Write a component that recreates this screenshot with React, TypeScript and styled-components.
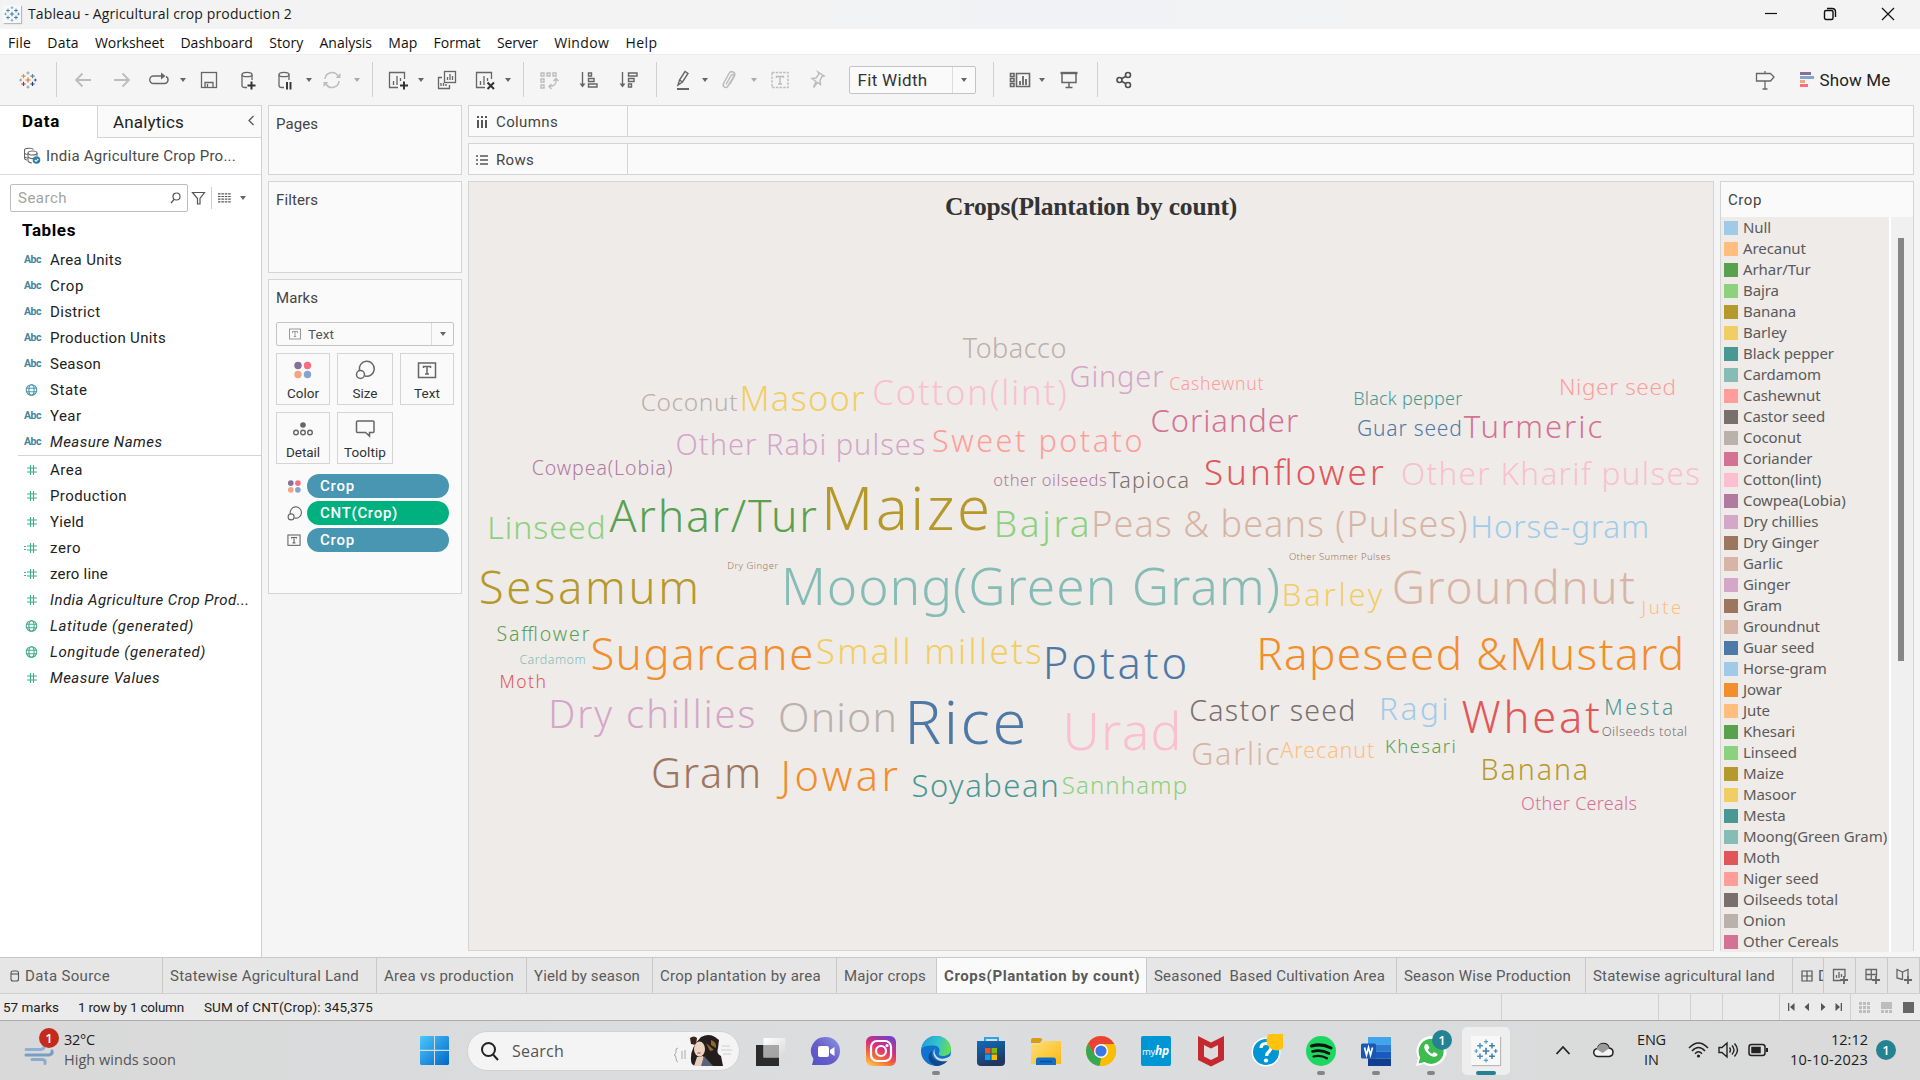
import React, { useLayoutEffect, useRef } from 'react';
import styled, { createGlobalStyle } from 'styled-components';

const Global = createGlobalStyle`
  * { box-sizing: border-box; }
  html, body { margin: 0; padding: 0; overflow: hidden; }
  body { background: #f5f5f5; }
  svg { display: block; flex: none; }
`;

const UI = `Roboto, "Liberation Sans", sans-serif`;
const SEGOE = `"Open Sans", "Noto Sans", sans-serif`;
const NOTO = `"Noto Sans", "Open Sans", sans-serif`;
const LINE = '#d4d4d4';

/* Text whose tracking is tuned so that it fills a given width. */
const FitSpan = styled.span`
  display: inline-block;
  width: max-content;
  white-space: pre;
  flex: none;
`;

function Fit({ w, children }: { w: number; children: string }) {
  const ref = useRef<HTMLSpanElement>(null);
  useLayoutEffect(() => {
    const el = ref.current;
    if (!el) return;
    el.style.letterSpacing = '0px';
    const natural = el.getBoundingClientRect().width;
    el.style.letterSpacing = `${(w - natural) / children.length}px`;
  }, [w, children]);
  return <FitSpan ref={ref}>{children}</FitSpan>;
}

const Screen = styled.div`
  width: 1920px;
  height: 1080px;
  display: flex;
  flex-direction: column;
  overflow: hidden;
  background: #f5f5f5;
  font-family: ${UI};
  font-size: 15px;
  color: #222;
`;

/* ---------- title bar and menu ---------- */

const TitleBar = styled.header`
  height: 29px;
  flex: none;
  display: flex;
  align-items: center;
  padding: 0 25px 1px 3px;
  background: linear-gradient(90deg, #f3f3f3 40%, #f0f2f5 55%, #f3f3f3 75%);
  font-family: ${SEGOE};
  font-size: 14px;
  line-height: 28px;
  color: #1a1a1a;
`;
const AppIcon = styled.div<{ $size: number; $mr?: number }>`
  width: ${(p) => p.$size}px;
  height: ${(p) => p.$size}px;
  margin-right: ${(p) => p.$mr ?? 0}px;
  display: flex;
  align-items: center;
  justify-content: center;
  background: #f8f8f8;
  box-shadow: 1px 1px 1px #b9b9b9;
`;
const WindowButtons = styled.div`
  margin-left: auto;
  display: flex;
  gap: 44.5px;
  align-items: center;
`;
const MenuBar = styled.nav`
  height: 25px;
  flex: none;
  display: flex;
  gap: 16.3px;
  padding-left: 8px;
  background: #fff;
  font-family: ${SEGOE};
  font-size: 14px;
  line-height: 27px;
  color: #111;
`;

const MENUS: [string, number][] = [
  ['File', 23], ['Data', 31.5], ['Worksheet', 69], ['Dashboard', 72.5], ['Story', 34], ['Analysis', 52.5],
  ['Map', 29], ['Format', 47], ['Server', 41], ['Window', 55], ['Help', 32],
];

function Plus({ x, y, r, c, w }: { x: number; y: number; r: number; c: string; w: number }) {
  return <path d={`M${x - r} ${y}h${2 * r}M${x} ${y - r}v${2 * r}`} stroke={c} strokeWidth={w} />;
}

function TableauMark({ size, colors }: { size: number; colors: string[] }) {
  const [c0, c1, c2, c3, c4, c5] = colors;
  return (
    <svg width={size} height={size} viewBox="0 0 32 32" fill="none">
      <Plus x={16} y={16} r={4.5} c={c0} w={2.2} />
      <Plus x={8} y={9} r={3.8} c={c1} w={2} />
      <Plus x={24} y={9} r={3.8} c={c2} w={2} />
      <Plus x={8} y={23} r={3.8} c={c3} w={2} />
      <Plus x={24} y={23} r={3.8} c={c4} w={2} />
      <Plus x={16} y={3.5} r={2.8} c={c5} w={1.5} />
      <Plus x={16} y={28.5} r={2.8} c={c5} w={1.5} />
      <Plus x={3} y={16} r={2.6} c={c5} w={1.5} />
      <Plus x={29} y={16} r={2.6} c={c4} w={1.5} />
    </svg>
  );
}
const BLUES = ['#3f7fae', '#4d8fbd', '#3f7fae', '#4d8fbd', '#3f7fae', '#5b9ac4'];

/* ---------- toolbar ---------- */

const Toolbar = styled.div`
  height: 51px;
  flex: none;
  display: flex;
  align-items: center;
  padding-bottom: 1px;
  background: #f5f5f5;
  border-top: 1px solid #ececec;
`;
const Slot = styled.div<{ $w: number; $gap: number }>`
  width: ${(p) => p.$w}px;
  margin-left: ${(p) => p.$gap}px;
  flex: none;
  display: flex;
  align-items: center;
  justify-content: center;
`;
const Rule = styled.div<{ $h: number }>`
  width: 1px;
  height: ${(p) => p.$h}px;
  flex: none;
  background: #cfcfcf;
`;
const Caret = styled.i<{ $c?: string; $s?: number }>`
  border: solid transparent;
  border-width: ${(p) => p.$s ?? 3}px ${(p) => p.$s ?? 3}px 0;
  border-top: ${(p) => (p.$s ?? 3) + 1}px solid ${(p) => p.$c ?? '#666'};
  border-bottom: 0;
`;
const Select = styled.div<{ $h: number }>`
  width: 100%;
  height: ${(p) => p.$h}px;
  display: flex;
  align-items: center;
  border: 1px solid #c4c4c4;
  border-radius: 2px;
  background: #fafafa;
`;
const SelectArrow = styled.div<{ $w: number }>`
  width: ${(p) => p.$w}px;
  align-self: stretch;
  margin-left: auto;
  border-left: 1px solid #dcdcdc;
  display: flex;
  align-items: center;
  justify-content: center;
`;
const SelectValue = styled.span`
  padding-left: 8px;
  font-size: 17px;
  color: #333;
`;
const ShowMe = styled.div`
  display: flex;
  align-items: center;
  gap: 6px;
  font-size: 17px;
  color: #222;
`;

const G = '#666';
const P = '#bcbcbc';

function Ico({ children, c = G, s = 24, w = 1.3 }: { children: React.ReactNode; c?: string; s?: number; w?: number }) {
  return (
    <svg width={s} height={s} viewBox={`0 0 ${s} ${s}`} fill="none" stroke={c} strokeWidth={w}>
      {children}
    </svg>
  );
}

const sheetPath = <><path d="M12 19.500H3.500v-15h15V11" /><path d="M7.500 17v-4M11 17V8M14.500 13v-3" /></>;

type Tool = { at: number; w: number; el: React.ReactNode };
const icon = (at: number, el: React.ReactNode): Tool => ({ at, w: 24, el });
const caret = (at: number, pale = false): Tool => ({ at, w: 8, el: <Caret $c={pale ? '#aaa' : '#666'} /> });
const rule = (at: number): Tool => ({ at: at + 0.5, w: 1, el: <Rule $h={35} /> });

const TOOLS: Tool[] = [
  icon(27.5, <TableauMark size={18} colors={['#e8762c', '#eb9129', '#5b879b', '#c72035', '#1f447e', '#7099a6']} />),
  rule(56),
  icon(83, <Ico c={P} w={1.8}><path d="M20 12H5M11.500 5.500L5 12l6.500 6.500" /></Ico>),
  icon(122, <Ico c={P} w={1.8}><path d="M4 12h15M12.500 5.500L19 12l-6.500 6.500" /></Ico>),
  icon(159, <Ico w={1.4}><path d="M14 8H6.500a3.700 3.700 0 0 0 0 7.500h11a3.700 3.700 0 0 0 1.500-7" /><path d="M14 4.500v7l4.500-3.500z" fill={G} stroke="none" /></Ico>),
  caret(183),
  icon(209, <Ico><rect x="4.500" y="4.500" width="15" height="15" /><path d="M8 19.500v-5h8v5M10.500 16v3" /></Ico>),
  icon(248, <Ico><path d="M11 19.500H9q-3 0-3-2V6.500M16 12V6.500" /><ellipse cx="11" cy="6.500" rx="5" ry="2.200" /><path d="M15.500 13.500v8M11.500 17.500h8" stroke="#333" strokeWidth="2" /></Ico>),
  icon(285, <Ico><path d="M11 19.500H9q-3 0-3-2V6.500M16 12V6.500" /><ellipse cx="11" cy="6.500" rx="5" ry="2.200" /><path d="M14 14v7.500M17.500 14v7.500" stroke="#333" strokeWidth="1.900" /></Ico>),
  caret(309),
  icon(332, <Ico c={P} w={1.5}><path d="M5 11a7 7 0 0 1 13-3M19 13a7 7 0 0 1-13 3" /><path d="M20.500 5v5h-5zM3.500 19v-5h5z" fill={P} stroke="none" /></Ico>),
  caret(357, true),
  rule(372),
  icon(397.5, <Ico>{sheetPath}<path d="M18 13.500v8M14 17.500h8" stroke="#333" strokeWidth="2" /></Ico>),
  caret(421),
  icon(447, <Ico><rect x="9.500" y="3.500" width="11" height="11" /><path d="M12.500 12V9M15 12V6M17.500 12V8M7 9.500H3.500v11h11V17M6 18v-3M8.500 18v-3M11 18v-2" /></Ico>),
  icon(484.5, <Ico>{sheetPath}<path d="M14.500 14.500l6.500 6.500M21 14.500L14.500 21" stroke="#333" strokeWidth="2" /></Ico>),
  caret(508),
  rule(523),
  icon(549, <Ico c={P} w={1.4}><path d="M4 5h3v3H4zM10 5h3v3h-3zM16 5h3v3h-3zM4 11h3v3H4zM4 17h3v3H4z" /><path d="M19 11q1 7-6.500 7.500M16.500 13l2.500-2.500 2.500 2.500M14.500 16l-2.500 2.500 2.500 2.500" /></Ico>),
  icon(588.5, <Ico w={1.4}><path d="M5.500 4v14" /><path d="M2.500 15.500h6l-3 4z" fill={G} stroke="none" /><path d="M11.500 5h3v3h-3zM11.500 10.500h5.500v3h-5.500zM11.500 16h8.500v3h-8.500z" /></Ico>),
  icon(628.5, <Ico w={1.4}><path d="M5.500 4v14" /><path d="M2.500 15.500h6l-3 4z" fill={G} stroke="none" /><path d="M11.500 5h8.500v3h-8.500zM11.500 10.500h5.500v3h-5.500zM11.500 16h3v3h-3z" /></Ico>),
  rule(656),
  icon(683, <Ico w={1.4}><path d="M7 17l1.500-5 5.500-8.500 3 2-5.500 8.500zM8.500 12l3 2" /><path d="M6 21h12" strokeWidth="2" /></Ico>),
  caret(704.5),
  icon(729, <Ico c={P} w={1.5}><path d="M9 16.500l5-9c1-2 3.500-.5 2.500 1.500l-5.500 9c-2 3-6 1-4.500-2.500l5.500-10c2-3.500 7-1.500 5.500 2.500l-4.500 8" /></Ico>),
  caret(753.5, true),
  icon(780, <Ico c={P} w={1.4}><rect x="4" y="4.500" width="16" height="15" strokeDasharray="2.500 1.200" /><path d="M8.500 10V8.500h7V10M12 8.500v7.500M10 16h4" /></Ico>),
  icon(817, <Ico c={P} w={1.5}><path d="M13 4l6 4-2 .5-2 4 .5 4-3-2-4 5 2.500-6-4-3 4-.5 3-4z" /></Ico>),
  { at: 912, w: 127, el: <Select $h={28}><SelectValue><Fit w={70}>Fit Width</Fit></SelectValue><SelectArrow $w={23}><Caret $s={3.5} /></SelectArrow></Select> },
  rule(993),
  icon(1020, <Ico w={1.6}><path d="M2.500 5.500h3.500v3H2.500zM2.500 10.500h3.500v3H2.500zM2.500 15.500h3.500v3H2.500zM8.500 5.500h13v13h-13z" /><path d="M12 17v-4M15 17V8M18 17v-6" strokeWidth="1.800" /></Ico>),
  caret(1042),
  icon(1069, <Ico w={1.5}><path d="M3.500 5h17" strokeWidth="2.400" /><path d="M5 6v8.500h14V6M12 14.500v5M8.500 19.500h7" /></Ico>),
  rule(1097),
  icon(1124, <Ico w={1.6} c="#505050"><circle cx="7.500" cy="12" r="2.500" /><circle cx="16" cy="7" r="2.500" /><circle cx="16" cy="17" r="2.500" /><path d="M9.700 10.700l4.200-2.400M9.700 13.300l4.200 2.400" /></Ico>),
  icon(1765, <Ico><path d="M3.500 5.500h14l3.500 3.500-3.500 4h-14zM12 3v2.500M12 13v8M9.500 21h5" /></Ico>),
  { at: 1845, w: 92, el: <ShowMe><svg width="14" height="16"><path fill="#866f98" d="M0 0h11v3H0z" /><path fill="#82a6cf" d="M0 4h14v3H0z" /><path fill="#f3a57f" d="M0 8h5v3H0z" /><path fill="#f5707f" d="M0 12h8v3H0z" /></svg><Fit w={71}>Show Me</Fit></ShowMe> },
];

function ToolStrip() {
  let end = 0;
  return (
    <Toolbar>
      {TOOLS.map((t, i) => {
        const gap = t.at - t.w / 2 - end;
        end = t.at + t.w / 2;
        return <Slot key={i} $w={t.w} $gap={gap}>{t.el}</Slot>;
      })}
    </Toolbar>
  );
}

/* ---------- data pane ---------- */

const Workspace = styled.main`
  height: 852px;
  flex: none;
  display: flex;
`;
const DataPane = styled.aside`
  width: 262px;
  flex: none;
  display: flex;
  flex-direction: column;
  background: #fff;
  border-top: 1px solid ${LINE};
  border-right: 1px solid #d0d0d0;
`;
const PaneTabs = styled.div`
  height: 32px;
  flex: none;
  display: flex;
`;
const DataTab = styled.div`
  width: 97px;
  padding-left: 22px;
  font: 700 17px/30px ${UI};
  color: #000;
`;
const AnalyticsTab = styled.div`
  flex: 1;
  display: flex;
  justify-content: space-between;
  padding: 0 6px 0 15px;
  font-size: 17px;
  line-height: 32px;
  background: #fafafa;
  border-left: 1px solid ${LINE};
  border-bottom: 1px solid ${LINE};
`;
const SourceRow = styled.div`
  height: 37px;
  flex: none;
  display: flex;
  align-items: center;
  gap: 5px;
  padding-left: 24px;
  color: #4a4a4a;
  border-bottom: 1px solid #dedede;
`;
const SearchRow = styled.div`
  height: 28px;
  flex: none;
  display: flex;
  align-items: center;
  margin: 9px 0 0 10px;
`;
const SearchBox = styled.div`
  width: 178px;
  height: 28px;
  margin-right: 3px;
  display: flex;
  align-items: center;
  justify-content: space-between;
  padding: 0 6px 0 7px;
  border: 1px solid #bdbdbd;
  border-radius: 2px;
  color: #a3a3a3;
`;
const Heading = styled.h2`
  margin: 8px 0 0 22px;
  font: 700 17px/21px ${UI};
  color: #000;
`;
const FieldList = styled.ul<{ $top: number; $lined?: boolean }>`
  list-style: none;
  margin: ${(p) => p.$top}px 0 0 18px;
  padding: 0;
  border-top: ${(p) => (p.$lined ? `1px solid ${LINE}` : '0')};
  padding-top: ${(p) => (p.$lined ? 1 : 0)}px;
`;
const Field = styled.li<{ $italic?: boolean }>`
  height: 26px;
  display: grid;
  grid-template-columns: 32px 1fr;
  align-items: center;
  font-style: ${(p) => (p.$italic ? 'italic' : 'normal')};
  color: #222;
  line-height: 26px;
`;
const FieldIcon = styled.span`
  display: flex;
  padding-left: 6px;
  font: 700 10.5px/26px ${UI};
  color: #45849d;
`;

const Globe = ({ c }: { c: string }) => (
  <svg width="16" height="14" viewBox="0 0 16 14" fill="none" stroke={c} strokeWidth="1.100">
    <circle cx="7.500" cy="7" r="5.300" /><ellipse cx="7.500" cy="7" rx="2.600" ry="5.300" /><path d="M2.500 5.200h10M2.500 8.800h10" />
  </svg>
);
const Hash = ({ calc }: { calc?: boolean }) => (
  <svg width="16" height="14" viewBox="0 0 16 14" fill="none" stroke="#3fae8b" strokeWidth="1.100">
    <path d="M3 5h10M3 9h10M6.500 2v10M9.500 2v10" />
    {calc && <path d="M-1 5.500h3M-1 8.500h3" />}
  </svg>
);

type FieldRow = [string, string, number, boolean?];
const DIMS: FieldRow[] = [
  ['abc', 'Area Units', 72], ['abc', 'Crop', 34], ['abc', 'District', 50.5], ['abc', 'Production Units', 116],
  ['abc', 'Season', 51], ['geo', 'State', 37.5], ['abc', 'Year', 31.5], ['abc', 'Measure Names', 112.5, true],
];
const MEASURES: FieldRow[] = [
  ['num', 'Area', 33], ['num', 'Production', 77], ['num', 'Yield', 34], ['calc', 'zero', 31], ['calc', 'zero line', 58],
  ['num', 'India Agriculture Crop Prod...', 199.5, true], ['geog', 'Latitude (generated)', 144, true],
  ['geog', 'Longitude (generated)', 156, true], ['num', 'Measure Values', 110, true],
];
const fieldIcon = (k: string) =>
  k === 'abc' ? <Fit w={17}>Abc</Fit> : k === 'geo' ? <Globe c="#4996b2" /> : k === 'geog' ? <Globe c="#3fae8b" /> : <Hash calc={k === 'calc'} />;
const fieldRows = (rows: FieldRow[]) =>
  rows.map(([k, name, w, it]) => (
    <Field key={name} $italic={it}><FieldIcon>{fieldIcon(k)}</FieldIcon><Fit w={w}>{name}</Fit></Field>
  ));

/* ---------- shelves ---------- */

const Shelves = styled.section`
  width: 194px;
  margin-left: 6px;
  flex: none;
  display: flex;
  flex-direction: column;
  gap: 6px;
`;
const Card = styled.div<{ $h: number }>`
  height: ${(p) => p.$h}px;
  padding: 0 7px;
  background: #fafafa;
  border: 1px solid ${LINE};
  color: #444;
`;
const CardTitle = styled.div<{ $mb?: number }>`
  line-height: 36px;
  margin-bottom: ${(p) => p.$mb ?? 0}px;
`;
const MarkType = styled.div`
  padding-left: 12px;
  display: flex;
  align-items: center;
  gap: 7px;
  font-size: 13.5px;
  color: #555;
`;
const MarkGrid = styled.div`
  display: grid;
  grid-template-columns: 54px 56px 54px;
  grid-auto-rows: 52px;
  gap: 7px;
  margin-top: 7px;
`;
const MarkButton = styled.div`
  border: 1px solid ${LINE};
  background: #fafafa;
  display: flex;
  flex-direction: column;
  align-items: center;
  font-size: 13.5px;
  line-height: 18px;
  color: #333;
  padding-top: 2px;
`;
const Pills = styled.div`
  display: flex;
  flex-direction: column;
  gap: 3px;
  margin-top: 10px;
`;
const PillRow = styled.div`
  display: grid;
  grid-template-columns: 22px 142px;
  padding-left: 8px;
  gap: 1px;
  align-items: center;
`;
const Pill = styled.div<{ $green?: boolean }>`
  height: 24px;
  border-radius: 12px;
  padding-left: 13px;
  background: ${(p) => (p.$green ? '#00b180' : '#4996b2')};
  color: #fff;
  font-weight: 500;
  line-height: 25px;
`;

const Dots = ({ s }: { s: number }) => (
  <svg width={s} height={s} viewBox="0 0 28 28">
    <circle cx="9" cy="9.500" r="3.700" fill="#866f98" /><circle cx="18.500" cy="9.500" r="3.700" fill="#f5707f" />
    <circle cx="9" cy="18.500" r="3.700" fill="#f3a57f" /><circle cx="18.500" cy="18.500" r="3.700" fill="#82a6cf" />
  </svg>
);
const SizeIcon = ({ s }: { s: number }) => (
  <svg width={s} height={s} viewBox="0 0 28 28" fill="none" stroke="#666" strokeWidth="1.500">
    <path d="M8.500 14.500A7.500 7.500 0 1 1 14 20" /><circle cx="9.500" cy="18.500" r="4" />
  </svg>
);
const TextIcon = ({ s, c = '#666' }: { s: number; c?: string }) => (
  <svg width={s} height={s} viewBox="0 0 28 28" fill="none" stroke={c} strokeWidth="1.500">
    <rect x="5.500" y="7" width="17" height="14.500" /><path d="M10.500 12v-1.500h7V12M14 10.500v7.500M12 18h4" />
  </svg>
);
const DetailIcon = () => (
  <svg width="28" height="28" viewBox="0 0 28 28" fill="none" stroke="#666" strokeWidth="1.400">
    <circle cx="14" cy="10" r="2.800" fill="#666" stroke="none" /><circle cx="7" cy="17.500" r="2.300" /><circle cx="14" cy="17.500" r="2.300" /><circle cx="21" cy="17.500" r="2.300" />
  </svg>
);
const TooltipIcon = () => (
  <svg width="28" height="28" viewBox="0 0 28 28" fill="none" stroke="#666" strokeWidth="1.500">
    <path d="M6.500 6h15.500q1 0 1 1v9.500q0 1-1 1h-3.500v3.500l-4-3.500H6.500q-1 0-1-1V7q0-1 1-1z" />
  </svg>
);

/* ---------- view ---------- */

const Canvas = styled.section`
  width: 1446px;
  margin-left: 6px;
  flex: none;
  display: flex;
  flex-direction: column;
  gap: 6px;
`;
const Shelf = styled.div`
  height: 32px;
  flex: none;
  display: flex;
  background: #fafafa;
  border: 1px solid ${LINE};
  line-height: 30px;
  color: #444;
`;
const ShelfLabel = styled.div`
  width: 159px;
  display: flex;
  align-items: center;
  gap: 8px;
  padding: 1px 0 0 7px;
  border-right: 1px solid ${LINE};
`;
const ViewRow = styled.div`
  height: 770px;
  display: flex;
  gap: 6px;
`;
const View = styled.div`
  width: 1246px;
  border: 1px solid ${LINE};
  background: #efebe8;
`;
const ViewTitle = styled.h1`
  margin: 0;
  height: 52px;
  text-align: center;
  font: 700 25.5px/49px "Liberation Serif", serif;
  color: #333;
`;
const CloudChart = styled.svg`
  font-family: ${NOTO};
  font-weight: 300;
`;
const Legend = styled.aside`
  width: 194px;
  border: 1px solid ${LINE};
  display: flex;
  flex-direction: column;
  background: #fafafa;
`;
const LegendTitle = styled.div`
  height: 35px;
  padding-left: 7px;
  line-height: 36px;
  color: #444;
`;
const LegendBody = styled.div`
  flex: 1;
  display: flex;
`;
const LegendList = styled.ul`
  width: 169px;
  margin: 0;
  padding: 0;
  list-style: none;
  background: #efebe8;
  border-right: 1px solid #fff;
`;
const LegendItem = styled.li<{ $c: string }>`
  height: 21px;
  display: flex;
  align-items: center;
  gap: 5px;
  padding-left: 3px;
  font: 400 15px/21px ${NOTO};
  color: #5a5a5a;
  letter-spacing: -0.08px;
  white-space: nowrap;
  &::before {
    content: '';
    width: 14px;
    height: 14px;
    flex: none;
    background: ${(p) => p.$c};
  }
`;
const ScrollTrack = styled.div`
  flex: 1;
  background: #f0f0f0;
  padding: 21px 0 0 7px;
  border-left: 1px solid #fff;
`;
const ScrollThumb = styled.div`
  width: 6px;
  height: 423px;
  background: #868686;
`;

const C = {
  blue: '#4e79a7', sky: '#a0cbe8', orange: '#f28e2b', peach: '#ffbe7d', green: '#59a14f', lime: '#8cd17d', gold: '#b6992d',
  yellow: '#f1ce63', teal: '#499894', aqua: '#86bcb6', red: '#e15759', salmon: '#ff9d9a', ash: '#79706e', stone: '#bab0ac',
  rose: '#d37295', pink: '#fabfd2', plum: '#b07aa1', lilac: '#d4a6c8', brown: '#9d7660', tan: '#d7b5a6',
};

const LEGEND: [string, string][] = [
  ['Null', C.sky], ['Arecanut', C.peach], ['Arhar/Tur', C.green], ['Bajra', C.lime], ['Banana', C.gold], ['Barley', C.yellow],
  ['Black pepper', C.teal], ['Cardamom', C.aqua], ['Cashewnut', C.salmon], ['Castor seed', C.ash], ['Coconut', C.stone],
  ['Coriander', C.rose], ['Cotton(lint)', C.pink], ['Cowpea(Lobia)', C.plum], ['Dry chillies', C.lilac], ['Dry Ginger', C.brown],
  ['Garlic', C.tan], ['Ginger', C.lilac], ['Gram', C.brown], ['Groundnut', C.tan], ['Guar seed', C.blue], ['Horse-gram', C.sky],
  ['Jowar', C.orange], ['Jute', C.peach], ['Khesari', C.green], ['Linseed', C.lime], ['Maize', C.gold], ['Masoor', C.yellow],
  ['Mesta', C.teal], ['Moong(Green Gram)', C.aqua], ['Moth', C.red], ['Niger seed', C.salmon], ['Oilseeds total', C.ash],
  ['Onion', C.stone], ['Other Cereals', C.rose],
];

/* word, left edge, right edge, baseline, font size, colour */
const WORDS: [string, number, number, number, number, string][] = [
  ['Tobacco', 963, 1065, 358, 27, C.stone],
  ['Coconut', 642, 737, 410.7, 24.5, C.stone],
  ['Masoor', 742.5, 864, 410.7, 34.5, C.yellow],
  ['Cotton(lint)', 874, 1065, 404.7, 34.5, C.pink],
  ['Ginger', 1071, 1163, 387, 29, C.lilac],
  ['Other Rabi pulses', 677, 924, 454.7, 29, C.lilac],
  ['Sweet potato', 933.5, 1141, 451.7, 30.5, C.salmon],
  ['Cowpea(Lobia)', 532.7, 671.4, 475, 19.5, C.plum],
  ['other oilseeds', 994, 1106, 486, 16.5, C.plum],
  ['Arhar/Tur', 610, 816, 531.7, 44.5, C.green],
  ['Maize', 826, 987, 530, 60, C.gold],
  ['Linseed', 490, 603, 538.7, 32, C.lime],
  ['Bajra', 997, 1086.5, 536.7, 37, C.lime],
  ['Dry Ginger', 728, 778, 568.7, 9.5, C.brown],
  ['Moong(Green Gram)', 785.3, 1277.5, 605, 51.5, C.aqua],
  ['Cashewnut', 1170, 1263, 390, 17.5, C.salmon],
  ['Black pepper', 1354.7, 1462, 405, 18, C.teal],
  ['Niger seed', 1561, 1674, 395, 22.5, C.salmon],
  ['Coriander', 1152, 1297.5, 431.7, 31, C.rose],
  ['Guar seed', 1358, 1460, 435.7, 21, C.blue],
  ['Turmeric', 1464, 1601.6, 437.7, 31, C.rose],
  ['Sunflower', 1205.7, 1383, 484.7, 35, C.red],
  ['Other Kharif pulses', 1402.5, 1698.4, 484.7, 31.5, C.pink],
  ['Tapioca', 1108.6, 1187.3, 487.7, 21.5, C.ash],
  ['Peas & beans (Pulses)', 1094.3, 1465.7, 536.7, 36, C.tan],
  ['Horse-gram', 1473, 1646.5, 537.7, 31.5, C.sky],
  ['Other Summer Pulses', 1289.4, 1390, 559.7, 9.5, C.brown],
  ['Sesamum', 481, 695, 604, 45.5, C.gold],
  ['Safflower', 497.5, 589, 640.7, 19.5, C.green],
  ['Cardamom', 520, 584.5, 663.7, 12.5, C.aqua],
  ['Moth', 501, 544.5, 687.7, 17.5, C.red],
  ['Sugarcane', 592.6, 811, 669.7, 43.5, C.orange],
  ['Small millets', 817.5, 1040, 663.7, 35, C.yellow],
  ['Potato', 1046.5, 1185, 678.7, 43.5, C.blue],
  ['Dry chillies', 551.4, 753.5, 727.7, 38, C.lilac],
  ['Onion', 780, 893.5, 731.7, 41, C.stone],
  ['Rice', 909.4, 1023.3, 744, 61.5, C.blue],
  ['Gram', 653, 757.5, 787.7, 41.5, C.brown],
  ['Jowar', 778, 897, 790.7, 41.5, C.orange],
  ['Soyabean', 913, 1056, 796.7, 31, C.teal],
  ['Urad', 1067, 1177, 750.3, 51.5, C.pink],
  ['Sannhamp', 1063, 1185, 793.7, 24, C.lime],
  ['Barley', 1284.5, 1381.6, 605.7, 31, C.yellow],
  ['Groundnut', 1394, 1634, 604, 46, C.tan],
  ['Jute', 1640.4, 1680.4, 614, 18.5, C.peach],
  ['Rapeseed &Mustard', 1260, 1680.4, 669.7, 44, C.orange],
  ['Castor seed', 1190.6, 1353, 720.7, 28.5, C.ash],
  ['Ragi', 1381.6, 1446, 719.7, 31.5, C.sky],
  ['Wheat', 1462, 1599, 732.7, 43.5, C.red],
  ['Mesta', 1606, 1671.4, 714.7, 21, C.teal],
  ['Oilseeds total', 1602.4, 1686, 735.7, 13, C.ash],
  ['Garlic', 1192.7, 1278.8, 764.7, 30.5, C.tan],
  ['Arecanut', 1280.4, 1374, 757.7, 21.5, C.peach],
  ['Khesari', 1386.5, 1454.3, 752.7, 18.5, C.green],
  ['Banana', 1483, 1585.7, 779.7, 28.5, C.gold],
  ['Other Cereals', 1522, 1636, 810, 18, C.rose],
];

/* side bearing, in em, of the outermost glyphs */
const lead = (ch: string) => ('TWA'.includes(ch) ? 0.01 : ch === 'J' ? -0.06 : 'COGSoc'.includes(ch) ? 0.05 : 0.085);
const trail = (ch: string) => ('rtcy'.includes(ch) ? 0.02 : 'nmuhidlap'.includes(ch) ? 0.085 : 0.05);

function WordCloud() {
  return (
    <CloudChart width="1244" height="716" viewBox="469 234 1244 716">
      {WORDS.map(([t, x0, x1, y, s, c]) => {
        const a = lead(t[0]) * s;
        const b = trail(t[t.length - 1]) * s;
        return (
          <text key={t} x={x0 - a} y={y} fontSize={s} fill={c} textLength={x1 - x0 + a + b} lengthAdjust="spacing">
            {t}
          </text>
        );
      })}
    </CloudChart>
  );
}

/* ---------- sheet tabs and status ---------- */

const SheetTabs = styled.div`
  height: 37px;
  flex: none;
  display: flex;
  background: #e6e6e6;
  border-top: 1px solid #c8c8c8;
  border-bottom: 1px solid #d0d0d0;
  color: #5a5a5a;
`;
const SheetTab = styled.div<{ $w: number; $active?: boolean; $pad?: number; $center?: boolean }>`
  width: ${(p) => p.$w}px;
  flex: none;
  display: flex;
  align-items: center;
  justify-content: ${(p) => (p.$center ? 'center' : 'flex-start')};
  gap: 5px;
  padding-left: ${(p) => (p.$center ? 0 : p.$pad ?? 7)}px;
  border-right: 1px solid #c8c8c8;
  overflow: hidden;
  line-height: ${(p) => (p.$active ? 34 : 36)}px;
  padding-top: ${(p) => (p.$active ? 0 : 1)}px;
  background: ${(p) => (p.$active ? '#fafafa' : 'transparent')};
  font-weight: ${(p) => (p.$active ? 700 : 400)};
`;
const StatusBar = styled.div`
  height: 27px;
  flex: none;
  display: flex;
  padding-left: 3px;
  background: #ebebeb;
  border-bottom: 1px solid #acacac;
  font-size: 13.5px;
  line-height: 26px;
  color: #222;
`;
const StatusText = styled.div<{ $w: number }>`
  width: ${(p) => p.$w}px;
  flex: none;
`;
const StatusCell = styled.div<{ $w: number }>`
  width: ${(p) => p.$w}px;
  flex: none;
  border-left: 1px solid #d0d0d0;
  display: flex;
  align-items: center;
  justify-content: center;
`;

const SHEETS: [string, number, number][] = [
  ['Statewise Agricultural Land', 214, 189], ['Area vs production', 150, 130], ['Yield by season', 126, 106],
  ['Crop plantation by area', 184, 161], ['Major crops', 100, 82], ['Crops(Plantation by count)', 210, 196],
  ['Seasoned  Based Cultivation Area', 250, 231], ['Season Wise Production', 189, 167], ['Statewise agricultural land', 207, 182],
];

/* ---------- taskbar ---------- */

const Taskbar = styled.footer`
  height: 59px;
  flex: none;
  display: flex;
  align-items: center;
  background: linear-gradient(90deg, #d9d9d9, #dbdddf 45%, #dadada);
  font-family: ${SEGOE};
  font-size: 14.5px;
  line-height: 20px;
  color: #1d1d1d;
`;
const Weather = styled.div`
  width: 420px;
  flex: none;
  display: flex;
  align-items: center;
  gap: 2px;
  padding: 0 0 2px 24px;
`;
const Stack = styled.div<{ $align?: string }>`
  display: flex;
  flex-direction: column;
  align-items: ${(p) => p.$align ?? 'flex-start'};
`;
const Soft = styled.span`
  color: #555;
`;
const TaskSearch = styled.div`
  width: 273px;
  height: 40px;
  margin: 0 3px 0 18px;
  flex: none;
  display: flex;
  align-items: center;
  gap: 12px;
  padding: 0 6px 0 12px;
  border-radius: 20px;
  border: 1px solid #d2d2d2;
  background: #f4f4f4;
  font-size: 16px;
  color: #555;
`;
const Art = styled.div`
  margin-left: auto;
`;
const TaskIcon = styled.div<{ $on?: boolean }>`
  width: ${(p) => (p.$on ? 48 : 55)}px;
  margin-left: ${(p) => (p.$on ? 3.5 : 0)}px;
  height: 48px;
  flex: none;
  position: relative;
  display: flex;
  align-items: center;
  justify-content: center;
  border-radius: 5px;
  background: ${(p) => (p.$on ? '#eeeeee' : 'transparent')};
`;
const RunDot = styled.i<{ $on?: boolean }>`
  position: absolute;
  bottom: ${(p) => (p.$on ? 0 : -0.5)}px;
  left: 50%;
  width: ${(p) => (p.$on ? 20 : 8)}px;
  height: 4px;
  transform: translateX(-50%);
  border-radius: 2px;
  background: ${(p) => (p.$on ? '#258292' : '#858585')};
`;
const Count = styled.b<{ $c: string }>`
  width: 20px;
  height: 20px;
  border-radius: 50%;
  display: flex;
  align-items: center;
  justify-content: center;
  background: ${(p) => p.$c};
  color: #fff;
  font: 600 13px/20px ${SEGOE};
`;
const CornerCount = styled.div`
  position: absolute;
  top: 3px;
  right: 6px;
`;
const WindBox = styled.div`
  position: relative;
  width: 38px;
  height: 40px;
`;
const WindCount = styled.div`
  position: absolute;
  left: 15px;
  top: -2px;
`;
const Tray = styled.div`
  margin-left: auto;
  padding: 0 24px 1px 0;
  display: flex;
  align-items: center;
`;
const TrayItem = styled.div<{ $ml: number }>`
  margin-left: ${(p) => p.$ml}px;
`;
const HpTile = styled.div`
  width: 30px;
  height: 30px;
  border-radius: 2px;
  background: #0096d6;
  color: #fff;
  font: 400 9.5px/29px ${SEGOE};
  text-align: center;
  white-space: nowrap;
  letter-spacing: -0.3px;
  b { font-style: italic; font-size: 12px; }
`;

const S = ({ children }: { children: React.ReactNode }) => <svg width="34" height="34" viewBox="0 0 34 34">{children}</svg>;

const TASKS: { el: React.ReactNode; run?: boolean; on?: boolean; badge?: boolean }[] = [
  { el: <S><defs><linearGradient id="tv" x1="0" y1="0" x2="1" y2="1"><stop offset="0" stopColor="#fff" /><stop offset="1" stopColor="#d8d8d8" /></linearGradient></defs><path fill="#2b2b2b" d="M2 11h23v21H2z" /><path fill="url(#tv)" d="M9.500 4h22v19.500h-22z" /><path fill="#8f8f8f" fillOpacity=".75" d="M9.500 11H25v12.500H9.500z" /></S> },
  { el: <S><defs><linearGradient id="ch" x1="0" y1="1" x2="1" y2="0"><stop offset="0" stopColor="#4f52c8" /><stop offset=".5" stopColor="#6a5fc8" /><stop offset="1" stopColor="#8c9be6" /></linearGradient></defs><path d="M17 3a14 14 0 1 1 0 28H3l1.500-6A14 14 0 0 1 17 3z" fill="url(#ch)" /><rect x="9" y="12" width="11" height="11" rx="2" fill="#fff" /><path d="M21 16l4.500-3v9L21 19z" fill="#fff" /></S> },
  { el: <S><defs><linearGradient id="ig" x1=".2" y1="1" x2=".7" y2="0"><stop offset="0" stopColor="#fdc04c" /><stop offset=".3" stopColor="#f56a3b" /><stop offset=".6" stopColor="#d92d7a" /><stop offset="1" stopColor="#7a3fc8" /></linearGradient></defs><rect x="2" y="2" width="30" height="30" rx="6" fill="url(#ig)" /><g fill="none" stroke="#fff" strokeWidth="2.200"><rect x="7" y="7" width="20" height="20" rx="6" /><circle cx="17" cy="17" r="5" /></g><circle cx="23" cy="11.500" r="1.500" fill="#fff" /></S> },
  { run: true, el: <S><defs><linearGradient id="eg" x1="0" y1=".3" x2="1" y2=".5"><stop offset="0" stopColor="#1c9ee0" /><stop offset=".55" stopColor="#36c3c9" /><stop offset="1" stopColor="#66e04f" /></linearGradient></defs><circle cx="17" cy="17" r="15" fill="#0f72cf" /><path d="M2.500 15C4 6 10 2 17 2c9 0 15 6 15 13 0 5-4 7-8 7-3 0-5-1-4-3 2-4-1-7.500-5.500-7.500C9 11.500 4 12 2.500 15z" fill="url(#eg)" /><path d="M13 17c-2 7 4 11 10 10l6-1c-3 4-8 6-12 6-6-2-11-10-4-15z" fill="#114a8b" /><path d="M17 14c-2.500 1-2 7 2 9.500 3 2 8 1.500 12-1.500l1 1.500-2.500 3c-4 1.500-9 1-12-1.500-4-3.500-4-9-.5-11z" fill="#dcdcdc" /></S> },
  { el: <S><defs><linearGradient id="st" x1="0" y1="0" x2=".4" y2="1"><stop offset="0" stopColor="#0f6cbd" /><stop offset="1" stopColor="#21375f" /></linearGradient></defs><path d="M11 9V4h13v5" fill="none" stroke="#2aa6e8" strokeWidth="2" /><path d="M3 7h28v21q0 4-4 4H7q-4 0-4-4z" fill="url(#st)" /><path fill="#f25022" d="M11 14h5.500v5.500H11z" /><path fill="#7fba00" d="M17.500 14H23v5.500h-5.500z" /><path fill="#00a4ef" d="M11 20.500h5.500V26H11z" /><path fill="#ffb900" d="M17.500 20.500H23V26h-5.500z" /></S> },
  { el: <S><defs><linearGradient id="fe" x1="0" y1="0" x2="1" y2="1"><stop offset="0" stopColor="#ffe07a" /><stop offset="1" stopColor="#fdb813" /></linearGradient></defs><path d="M2 6q0-2 2-2h7q1.500 0 2.500 2h-.5L11 9H2z" fill="#dc9a0c" /><path d="M2 10h9l3-3h17q1 0 1 1v22H2z" fill="url(#fe)" /><path d="M7 31v-5q0-2.500 2.500-2.500h15Q27 23.500 27 26v5z" fill="#0f6fc6" /><path d="M11 27.500h12" stroke="#0a4d94" strokeWidth="1.500" /></S> },
  { el: <S><circle cx="17" cy="17" r="15" fill="#fbbc04" /><path d="M4 9.500A15 15 0 0 1 30 9.500H17L10.500 21z" fill="#ea4335" /><path d="M4 9.500l6.500 11.300L17 24.500 15.500 32A15 15 0 0 1 4 9.500z" fill="#34a853" /><path d="M30 9.500A15 15 0 0 1 15.500 32L23.500 20.500V9.500z" fill="#fbbc04" /><path d="M17 9.500h13" stroke="#ea4335" /><circle cx="17" cy="17" r="7" fill="#fff" /><circle cx="17" cy="17" r="5.600" fill="#3b78e7" /></S> },
  { el: <HpTile>my<b>hp</b></HpTile> },
  { el: <S><path fill="#c5282f" d="M4 2l13 6.500L30 2v24l-13 6.500L4 26z" /><path fill="#dcdcdc" d="M10 11l7 3.500 7-3.500v11.500L17 26l-7-3.500z" /></S> },
  { el: <S><circle cx="17" cy="18" r="14.500" fill="#fff" /><circle cx="17" cy="18" r="13" fill="#0096d6" /><path d="M12 14q0-4.500 5-4.500t5 4.500c0 3.500-4.500 3.500-4.500 8" fill="none" stroke="#fff" strokeWidth="3.200" /><circle cx="17" cy="26.500" r="2.100" fill="#fff" /><circle cx="27.500" cy="6.500" r="10" fill="#ffc20e" /></S> },
  { run: true, el: <S><circle cx="17" cy="17" r="15" fill="#1ed760" /><g fill="none" stroke="#111" strokeLinecap="round"><path d="M7.500 12q10-3 19.500 2" strokeWidth="3" /><path d="M8.500 17.500q8.500-2.500 16.500 2" strokeWidth="2.600" /><path d="M9.500 22.500q7-2 13.500 1.800" strokeWidth="2.200" /></g></S> },
  { run: true, el: <S><path fill="#41a5ee" d="M9 3h23v7.500H9z" /><path fill="#2b7cd3" d="M9 10.500h23v7H9z" /><path fill="#185abd" d="M9 17.500h23v7H9z" /><path fill="#103f91" d="M9 24.500h23V32H9z" /><rect x="2" y="9.500" width="15" height="15" rx="1.500" fill="#1a56b4" /><path d="M5.500 13.500l2 7.500 2-7.500 2 7.500 2-7.500" fill="none" stroke="#fff" strokeWidth="1.700" /></S> },
  { run: true, badge: true, el: <S><path d="M2 32l2.200-8A15 15 0 1 1 10 30z" fill="#fff" /><path d="M4.500 29.500l1.700-6A12.500 12.500 0 1 1 10.500 28z" fill="#3dbb4e" /><path d="M11.500 10c-3 3 0 8 4 11s8 2 8-1l-3.500-2-2 2c-2-1-3.500-2.500-4.200-4.200l1.700-1.800L14 10.500z" fill="#fff" /></S> },
  { run: true, on: true, el: <AppIcon $size={29}><TableauMark size={24} colors={BLUES} /></AppIcon> },
];

export default function App() {
  return (
    <Screen>
      <Global />
      <TitleBar>
        <AppIcon $size={18} $mr={7}><TableauMark size={16} colors={BLUES} /></AppIcon>
        <Fit w={264}>Tableau - Agricultural crop production 2</Fit>
        <WindowButtons>
          <svg width="14" height="14"><path d="M1 6.500h12" stroke="#111" strokeWidth="1.200" /></svg>
          <svg width="14" height="14" fill="none" stroke="#111" strokeWidth="1.400"><rect x="1.500" y="3.500" width="8.500" height="9" rx="1.500" /><path d="M4 1.500h5q3.500 0 3.500 3.500v5" /></svg>
          <svg width="14" height="14"><path d="M1 1l12 12M13 1L1 13" stroke="#111" strokeWidth="1.200" /></svg>
        </WindowButtons>
      </TitleBar>
      <MenuBar>{MENUS.map(([m, w]) => <Fit key={m} w={w}>{m}</Fit>)}</MenuBar>
      <ToolStrip />

      <Workspace>
        <DataPane>
          <PaneTabs>
            <DataTab><Fit w={38}>Data</Fit></DataTab>
            <AnalyticsTab>
              <Fit w={71}>Analytics</Fit>
              <svg width="8" height="28" fill="none" stroke="#555" strokeWidth="1.300"><path d="M6.500 10L2 14.500 6.500 19" /></svg>
            </AnalyticsTab>
          </PaneTabs>
          <SourceRow>
            <svg width="17" height="18" viewBox="0 0 17 18" fill="none" stroke="#666" strokeWidth="1.100">
              <path d="M3 13c-2 0-2.500-1-2.500-2V3c0-2 8-2.500 9-.500M.5 6q1 1.500 3 1.500M.5 9.500q1 1.500 3 1.500" />
              <ellipse cx="8.500" cy="6" rx="4.500" ry="2" /><path d="M4 6v8q1 2 4 2M13 6v3M4 10q3 2 5 1.500" />
              <circle cx="12.500" cy="13" r="3.800" fill="#2f7fa3" stroke="none" /><path d="M10.800 13l1.300 1.300 2.200-2.400" stroke="#fff" />
            </svg>
            <Fit w={190}>India Agriculture Crop Pro...</Fit>
          </SourceRow>
          <SearchRow>
            <SearchBox>
              <Fit w={49}>Search</Fit>
              <svg width="11" height="12" fill="none" stroke="#555" strokeWidth="1.200"><circle cx="6.500" cy="4.500" r="3.500" /><path d="M4 7.500L1 11" /></svg>
            </SearchBox>
            <svg width="15" height="14" fill="none" stroke="#555" strokeWidth="1.200"><path d="M1.500 1.500h12L9 7.500V13H6.500V7.500z" /></svg>
            <Slot $w={1} $gap={5}><Rule $h={22} /></Slot>
            <Slot $w={13} $gap={6}><svg width="13" height="10" stroke="#555" strokeWidth="1.200" strokeDasharray="2.500 .9"><path d="M0 .8h13M0 3.500h13M0 6.200h13M0 8.900h13" /></svg></Slot>
            <Slot $w={8} $gap={8}><Caret $s={3.5} /></Slot>
          </SearchRow>
          <Heading><Fit w={54}>Tables</Fit></Heading>
          <FieldList $top={6}>{fieldRows(DIMS)}</FieldList>
          <FieldList $top={0} $lined>{fieldRows(MEASURES)}</FieldList>
        </DataPane>

        <Shelves>
          <Card $h={70}><CardTitle><Fit w={42}>Pages</Fit></CardTitle></Card>
          <Card $h={92}><CardTitle><Fit w={42}>Filters</Fit></CardTitle></Card>
          <Card $h={315}>
            <CardTitle $mb={6}><Fit w={42}>Marks</Fit></CardTitle>
            <Slot $w={178} $gap={0}>
              <Select $h={24}>
                <MarkType><svg width="12" height="12" fill="none" stroke="#999"><rect x=".5" y="1" width="11" height="10" /><path d="M3.500 5V3.500h5V5M6 3.500v5M4.800 8.500h2.400" /></svg><Fit w={26}>Text</Fit></MarkType>
                <SelectArrow $w={22}><Caret $s={3.5} /></SelectArrow>
              </Select>
            </Slot>
            <MarkGrid>
              <MarkButton><Dots s={28} /><Fit w={32}>Color</Fit></MarkButton>
              <MarkButton><SizeIcon s={28} /><Fit w={25}>Size</Fit></MarkButton>
              <MarkButton><TextIcon s={28} /><Fit w={26}>Text</Fit></MarkButton>
              <MarkButton><DetailIcon /><Fit w={34}>Detail</Fit></MarkButton>
              <MarkButton><TooltipIcon /><Fit w={42}>Tooltip</Fit></MarkButton>
            </MarkGrid>
            <Pills>
              <PillRow><Dots s={21} /><Pill><Fit w={35}>Crop</Fit></Pill></PillRow>
              <PillRow><SizeIcon s={21} /><Pill $green><Fit w={78}>CNT(Crop)</Fit></Pill></PillRow>
              <PillRow><TextIcon s={20} /><Pill><Fit w={35}>Crop</Fit></Pill></PillRow>
            </Pills>
          </Card>
        </Shelves>

        <Canvas>
          <Shelf>
            <ShelfLabel>
              <svg width="12" height="12" stroke="#555" strokeWidth="2"><path d="M2 0v2M6 0v2M10 0v2M2 4v8M6 4v8M10 4v8" /></svg>
              <Fit w={62}>Columns</Fit>
            </ShelfLabel>
          </Shelf>
          <Shelf>
            <ShelfLabel>
              <svg width="12" height="12" stroke="#555" strokeWidth="1.500"><path d="M0 2h2M0 6h2M0 10h2M4 2h8M4 6h8M4 10h8" /></svg>
              <Fit w={38}>Rows</Fit>
            </ShelfLabel>
          </Shelf>
          <ViewRow>
            <View>
              <ViewTitle><Fit w={292}>Crops(Plantation by count)</Fit></ViewTitle>
              <WordCloud />
            </View>
            <Legend>
              <LegendTitle><Fit w={34}>Crop</Fit></LegendTitle>
              <LegendBody>
                <LegendList>{LEGEND.map(([n, c]) => <LegendItem key={n} $c={c}>{n}</LegendItem>)}</LegendList>
                <ScrollTrack><ScrollThumb /></ScrollTrack>
              </LegendBody>
            </Legend>
          </ViewRow>
        </Canvas>
      </Workspace>

      <SheetTabs>
        <SheetTab $w={163} $pad={10}>
          <svg width="10" height="12" fill="none" stroke="#555" strokeWidth="1.100"><rect x="1" y="1" width="7.500" height="10" rx="2" /><path d="M1 4h7.500" /></svg>
          <Fit w={85}>Data Source</Fit>
        </SheetTab>
        {SHEETS.map(([n, w, t], i) => <SheetTab key={n} $w={w} $active={i === 5}><Fit w={t}>{n}</Fit></SheetTab>)}
        <SheetTab $w={31} $pad={8}>
          <svg width="12" height="12" fill="none" stroke="#555" strokeWidth="1.200"><path d="M1 1h10v10H1zM6 1v10M1 6h10" /></svg>D
        </SheetTab>
        <SheetTab $w={32} $center><Ico s={18}><path d="M10 13.500H2.500v-11H14V10M5.500 11V8M8 11V5M10.500 10V7" /><path d="M13 9v8M9 13h8" strokeWidth="1.800" /></Ico></SheetTab>
        <SheetTab $w={32} $center><Ico s={18}><path d="M9 12.500H3v-10h10.500V9M8.300 2.500v10M3 7.500h10.500" /><path d="M13 9v8M9 13h8" strokeWidth="1.800" /></Ico></SheetTab>
        <SheetTab $w={32} $center><Ico s={18}><path d="M7.500 12.500L2 11V2.500L7.500 5 13 2.500V9M7.500 5v8" /><path d="M13 9v8M9 13h8" strokeWidth="1.800" /></Ico></SheetTab>
      </SheetTabs>
      <StatusBar>
        <StatusText $w={75}><Fit w={56}>57 marks</Fit></StatusText>
        <StatusText $w={126}><Fit w={106}>1 row by 1 column</Fit></StatusText>
        <StatusText $w={1297}><Fit w={169}>SUM of CNT(Crop): 345,375</Fit></StatusText>
        <StatusCell $w={157} />
        <StatusCell $w={32} />
        <StatusCell $w={32} />
        <StatusCell $w={57} />
        <StatusCell $w={71}>
          <svg width="56" height="10" fill="#555"><path d="M1 1h1.300v8H1zM7.500 1v8L3 5zM22 1v8l-4.500-4zM34 1v8l4.500-4zM48.500 1v8L53 5zM53.700 1H55v8h-1.300z" /></svg>
        </StatusCell>
        <StatusCell $w={72}>
          <svg width="56" height="11"><path fill="#bdbdbd" d="M0 0h3v3H0zM4 0h3v3H4zM8 0h3v3H8zM0 4h3v3H0zM4 4h3v3H4zM8 4h3v3H8zM0 8h3v3H0zM4 8h3v3H4zM8 8h3v3H8zM22 0h11v7H22zM22 8h3v3h-3zM26 8h3v3h-3zM30 8h3v3h-3z" /><path fill="#666" d="M44 0h11v11H44z" /></svg>
        </StatusCell>
      </StatusBar>

      <Taskbar>
        <Weather>
          <WindBox>
            <svg width="32" height="40" viewBox="0 0 32 40" fill="none" strokeLinecap="round" strokeWidth="3">
              <path d="M2 19.500h15q4-1 3-4" stroke="#8fb0d2" /><path d="M2 25h23q4-1 3-4" stroke="#7b9dc4" /><path d="M8 29.500h10q4 0 3 4" stroke="#8aaad0" />
            </svg>
            <WindCount><Count $c="#c42b1c">1</Count></WindCount>
          </WindBox>
          <Stack><Fit w={31}>32°C</Fit><Soft><Fit w={112}>High winds soon</Fit></Soft></Stack>
        </Weather>
        <svg width="29" height="29" viewBox="0 0 29 29">
          <defs><linearGradient id="wn" x1="0" y1="0" x2="1" y2="1"><stop offset="0" stopColor="#4cc8fb" /><stop offset="1" stopColor="#0067c8" /></linearGradient></defs>
          <path fill="url(#wn)" d="M1 0h13v13.800H0V1zM15 0h13l1 1v12.800H15zM0 15h14v14H1l-1-1zM15 15h14v13l-1 1H15z" />
        </svg>
        <TaskSearch>
          <svg width="20" height="20" fill="none" stroke="#222" strokeWidth="2"><circle cx="8.500" cy="8.500" r="6.500" /><path d="M13 13.500l5 5.500" /></svg>
          <Fit w={52}>Search</Fit>
          <Art>
            <svg width="60" height="34" viewBox="0 0 60 34">
              <path d="M5 14q-3 0-2 4 0 2-2 3 2 0 2 3 0 4 2 4M9 17v8M12 16v9" fill="none" stroke="#aaa" />
              <path d="M28 3q8-4 14 0l4 3-1 8q-2 6 3 8l2 10H24q-6 0-6-6-1-12 10-23z" fill="#241d1c" />
              <path d="M17 4q4-3 7 0l-1 7-5-1z" fill="#3a2417" />
              <ellipse cx="26.500" cy="15" rx="5.500" ry="7.500" fill="#edd3c3" />
              <path d="M24 23l6-1 5 10H21z" fill="#e6cdbd" /><path d="M31 22l9 10H28z" fill="#5a6478" />
              <path d="M38 6q6 2 5 8l-5-3zM33 9l4 8 4-1z" fill="#8a6a2d" /><path d="M24.500 19h3" stroke="#a63a3a" />
              <path d="M49 12h8M48 16h11M50 20h8" stroke="#c4c4c4" strokeWidth=".8" />
            </svg>
          </Art>
        </TaskSearch>
        {TASKS.map((t, i) => (
          <TaskIcon key={i} $on={t.on}>
            {t.el}
            {t.run && <RunDot $on={t.on} />}
            {t.badge && <CornerCount><Count $c="#258292">1</Count></CornerCount>}
          </TaskIcon>
        ))}
        <Tray>
          <svg width="16" height="12" fill="none" stroke="#222" strokeWidth="1.800"><path d="M1.500 10L8 3l6.500 7" /></svg>
          <TrayItem $ml={22}><svg width="21" height="18" viewBox="0 0 21 18" fill="#f4f4f4" stroke="#222" strokeWidth="1.500"><path d="M6 15.500H5a4 4 0 0 1-.5-8Q6 2.500 10.500 2.500T16 7q4 .5 4 4.300T16 15.500z" /><path d="M3.500 8Q6 2.500 10.500 2.800T16 7.500L9.500 12z" fill="#9a9a9a" stroke="none" /></svg></TrayItem>
          <TrayItem $ml={23}><Stack $align="center"><Fit w={29}>ENG</Fit><Fit w={15}>IN</Fit></Stack></TrayItem>
          <TrayItem $ml={22}><svg width="21" height="18" viewBox="0 0 21 18" fill="none" stroke="#222" strokeWidth="1.500"><path d="M1 7Q10.500-3 20 7M4 10q6.500-7 13 0M7 12.700q3.500-3.800 7 0" /><circle cx="10.500" cy="15" r="1.600" fill="#222" stroke="none" /></svg></TrayItem>
          <TrayItem $ml={9}><svg width="21" height="18" viewBox="0 0 21 18" fill="none" stroke="#222" strokeWidth="1.400"><path d="M1 6.500h3L9 2v14l-5-4.500H1zM11.500 6.500q2 2.500 0 5M14 4.500q4 4.500 0 9M16.500 2.500q6 6.500 0 13" /></svg></TrayItem>
          <TrayItem $ml={9}><svg width="21" height="14" viewBox="0 0 21 14" fill="none" stroke="#222" strokeWidth="1.500"><rect x="1" y="1.500" width="16" height="11" rx="2.500" /><path d="M4 4.500h8v5H4z" fill="#222" /><path d="M19 5v4" strokeWidth="2" /></svg></TrayItem>
          <TrayItem $ml={21}><Stack $align="flex-end"><Fit w={37}>12:12</Fit><Fit w={78}>10-10-2023</Fit></Stack></TrayItem>
          <TrayItem $ml={8}><Count $c="#258292">1</Count></TrayItem>
        </Tray>
      </Taskbar>
    </Screen>
  );
}
